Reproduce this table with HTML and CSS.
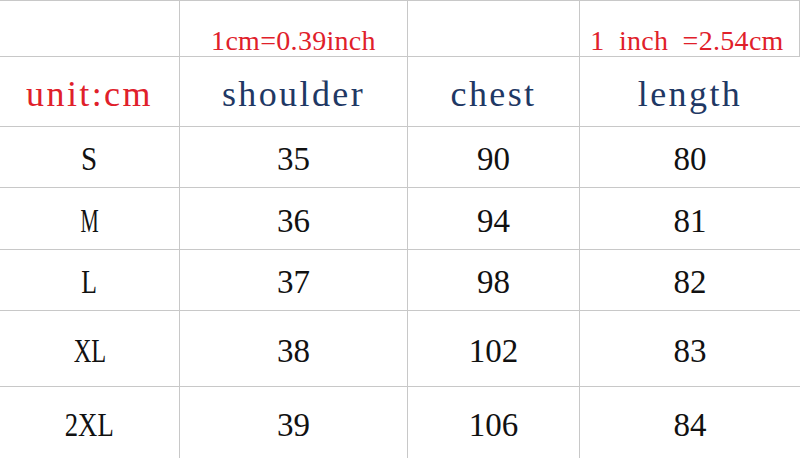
FILE: index.html
```html
<!DOCTYPE html>
<html>
<head>
<meta charset="utf-8">
<link rel="stylesheet" href="styles.css">
</head>
<body>
<div class="chart">
  <div class="cell note"></div>
  <div class="cell note"><span class="red">1cm=0.39inch</span></div>
  <div class="cell note"></div>
  <div class="cell note note-end"><span class="red wide">1 inch =2.54cm</span></div>

  <div class="cell head red">unit:cm</div>
  <div class="cell head">shoulder</div>
  <div class="cell head">chest</div>
  <div class="cell head">length</div>

  <div class="cell val"><span class="size sz-s">S</span></div><div class="cell val">35</div><div class="cell val">90</div><div class="cell val">80</div>
  <div class="cell val"><span class="size sz-m">M</span></div><div class="cell val">36</div><div class="cell val">94</div><div class="cell val">81</div>
  <div class="cell val"><span class="size sz-l">L</span></div><div class="cell val">37</div><div class="cell val">98</div><div class="cell val">82</div>
  <div class="cell val"><span class="size sz-xl">XL</span></div><div class="cell val">38</div><div class="cell val">102</div><div class="cell val">83</div>
  <div class="cell val"><span class="size sz-2xl">2XL</span></div><div class="cell val">39</div><div class="cell val">106</div><div class="cell val">84</div>
</div>
</body>
</html>
```
FILE: styles.css
```css
html, body {
  margin: 0;
  padding: 0;
  background: #ffffff;
}

.chart {
  width: 800px;
  height: 458px;
  box-sizing: border-box;
  padding-top: 1px;
  display: grid;
  grid-template-columns: 179px 227px 171px 220px;
  grid-template-rows: 55px 69px 60px 61px 60px 75px 71px;
  gap: 1px;
  background: #c8c8c8;
  overflow: hidden;
}

.cell {
  background: #ffffff;
  display: flex;
  justify-content: center;
  align-items: center;
  white-space: nowrap;
  box-sizing: border-box;
}

.note {
  align-items: flex-end;
  font-family: "Liberation Serif", serif;
  font-size: 28px;
  line-height: 1;
  letter-spacing: 0.3px;
  padding-bottom: 1px;
}

.note-end {
  box-shadow: inset -1px 0 0 #c8c8c8;
  padding-right: 6px;
}

.wide {
  word-spacing: 7px;
}

.head {
  font-family: "Liberation Serif", serif;
  font-size: 36px;
  letter-spacing: 2.4px;
  color: #1f3864;
  padding-top: 4px;
}

.red {
  color: #e0202a;
}

.val {
  font-family: "Liberation Serif", serif;
  font-size: 33px;
  color: #111111;
  padding-top: 5px;
}

.size {
  display: inline-block;
}

.sz-s { transform: scaleX(0.88); }
.sz-m { transform: scaleX(0.62); }
.sz-l { transform: scaleX(0.78); }
.sz-xl { transform: scaleX(0.74); }
.sz-2xl { transform: scaleX(0.81); }
```
